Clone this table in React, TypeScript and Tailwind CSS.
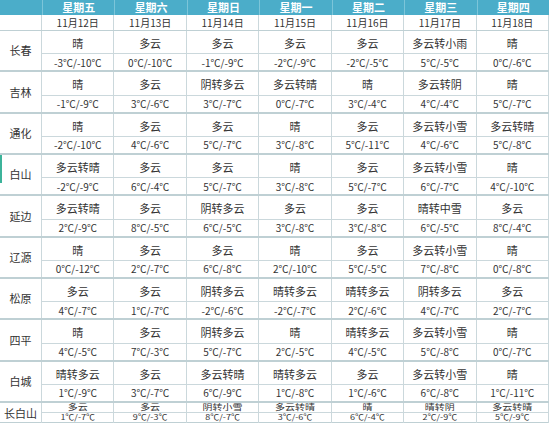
import React from "react";

const days = [
  ["星期五", "11月12日"],
  ["星期六", "11月13日"],
  ["星期日", "11月14日"],
  ["星期一", "11月15日"],
  ["星期二", "11月16日"],
  ["星期三", "11月17日"],
  ["星期四", "11月18日"],
];

type City = { name: string; w: string[]; t: string[] };

const cities: City[] = [
  { name: "长春", w: ["晴", "多云", "多云", "多云", "多云", "多云转小雨", "晴"], t: ["-3℃/-10℃", "0℃/-10℃", "-1℃/-9℃", "-2℃/-9℃", "-2℃/-5℃", "5℃/-5℃", "0℃/-6℃"] },
  { name: "吉林", w: ["晴", "多云", "阴转多云", "多云转晴", "晴", "多云转阴", "晴"], t: ["-1℃/-9℃", "3℃/-6℃", "3℃/-7℃", "0℃/-7℃", "3℃/-4℃", "4℃/-4℃", "5℃/-7℃"] },
  { name: "通化", w: ["晴", "多云", "多云", "晴", "多云", "多云转小雪", "多云转晴"], t: ["-2℃/-10℃", "4℃/-6℃", "5℃/-7℃", "3℃/-8℃", "5℃/-11℃", "4℃/-6℃", "5℃/-8℃"] },
  { name: "白山", w: ["多云转晴", "多云", "多云", "晴", "多云", "多云转小雪", "晴"], t: ["-2℃/-9℃", "6℃/-4℃", "5℃/-7℃", "3℃/-8℃", "5℃/-7℃", "6℃/-7℃", "4℃/-10℃"] },
  { name: "延边", w: ["多云转晴", "多云", "阴转多云", "多云", "多云", "晴转中雪", "多云"], t: ["2℃/-9℃", "8℃/-5℃", "6℃/-5℃", "3℃/-8℃", "3℃/-8℃", "6℃/-5℃", "8℃/-4℃"] },
  { name: "辽源", w: ["晴", "多云", "多云", "晴", "多云", "多云转小雪", "晴"], t: ["0℃/-12℃", "2℃/-7℃", "6℃/-8℃", "2℃/-10℃", "5℃/-5℃", "7℃/-8℃", "0℃/-8℃"] },
  { name: "松原", w: ["多云", "多云", "阴转多云", "晴转多云", "晴转多云", "阴转多云", "多云"], t: ["4℃/-7℃", "1℃/-7℃", "-2℃/-6℃", "-2℃/-7℃", "2℃/-6℃", "4℃/-7℃", "2℃/-7℃"] },
  { name: "四平", w: ["晴", "多云", "阴转多云", "晴", "晴转多云", "多云转小雪", "晴"], t: ["4℃/-5℃", "7℃/-3℃", "5℃/-7℃", "2℃/-5℃", "4℃/-5℃", "5℃/-8℃", "0℃/-7℃"] },
  { name: "白城", w: ["晴转多云", "多云", "多云转晴", "晴转多云", "多云", "多云转小雪", "晴"], t: ["1℃/-9℃", "3℃/-7℃", "6℃/-9℃", "1℃/-8℃", "1℃/-6℃", "6℃/-8℃", "1℃/-11℃"] },
];

const last: City = { name: "长白山", w: ["多云", "多云", "阴转小雪", "多云转晴", "晴", "晴转阴", "多云转晴"], t: ["1℃/-7℃", "9℃/-3℃", "8℃/-7℃", "3℃/-6℃", "6℃/-4℃", "2℃/-9℃", "5℃/-9℃"] };

const font = { fontFamily: '"Noto Sans CJK SC", "Noto Sans", sans-serif' };

function CityBlock({ c, idx }: { c: City; idx: number }) {
  return (
    <div className="relative grid h-[41.33px] grid-cols-[42px_repeat(7,1fr)] grid-rows-[1fr_16px] border-b-2 border-[#bfd0d4]">
      <div className="row-span-2 flex items-center justify-center border-r border-[#cbd8dc] text-[11px] text-[#333]">
        {c.name}
      </div>
      {c.w.map((w, i) => (
        <div key={"w" + i} className="flex items-center justify-center border-r border-b border-[#cbd8dc] pt-[2px] text-[11px] text-[#333]">
          {w}
        </div>
      ))}
      {c.t.map((t, i) => (
        <div key={"t" + i} className="flex items-center justify-center border-r border-[#cbd8dc] pt-[1px] text-[10px] leading-none text-[#333]">
          {t}
        </div>
      ))}
      {idx === 3 && <div className="absolute left-0 top-0 h-[28px] w-[2px] bg-[#3cb39a]" />}
    </div>
  );
}

export default function App() {
  return (
    <div className="h-[426px] w-[550px] overflow-hidden bg-white" style={font}>
      <div className="w-[549px]">
        <div className="grid h-[15px] grid-cols-[42px_repeat(7,1fr)] bg-[#4badc9]">
          <div />
          {days.map((d, i) => (
            <div key={i} className="flex items-center justify-center border-l border-[#7cc5d9] text-[11px] font-semibold leading-none text-white">
              {d[0]}
            </div>
          ))}
        </div>
        <div className="grid h-[16px] grid-cols-[42px_repeat(7,1fr)] border-b border-[#bfd0d4]">
          <div className="border-r border-[#cbd8dc]" />
          {days.map((d, i) => (
            <div key={i} className="flex items-center justify-center border-r border-[#cbd8dc] text-[10px] leading-none text-[#333]">
              {d[1]}
            </div>
          ))}
        </div>
        {cities.map((c, i) => (
          <CityBlock key={c.name} c={c} idx={i} />
        ))}
        <div className="grid h-[20px] grid-cols-[42px_repeat(7,1fr)] grid-rows-[10px_10px] border-b border-[#bfd0d4]">
          <div className="row-span-2 flex items-center justify-center border-r border-[#cbd8dc] text-[11px] text-[#333]">
            {last.name}
          </div>
          {last.w.map((w, i) => (
            <div key={"w" + i} className="flex items-center justify-center border-r border-b border-[#cbd8dc] text-[10px] leading-none text-[#333]">
              <span className="scale-y-[0.8]">{w}</span>
            </div>
          ))}
          {last.t.map((t, i) => (
            <div key={"t" + i} className="flex items-center justify-center border-r border-[#cbd8dc] text-[9px] leading-none text-[#333]">
              <span className="scale-y-[0.85]">{t}</span>
            </div>
          ))}
        </div>
      </div>
    </div>
  );
}
